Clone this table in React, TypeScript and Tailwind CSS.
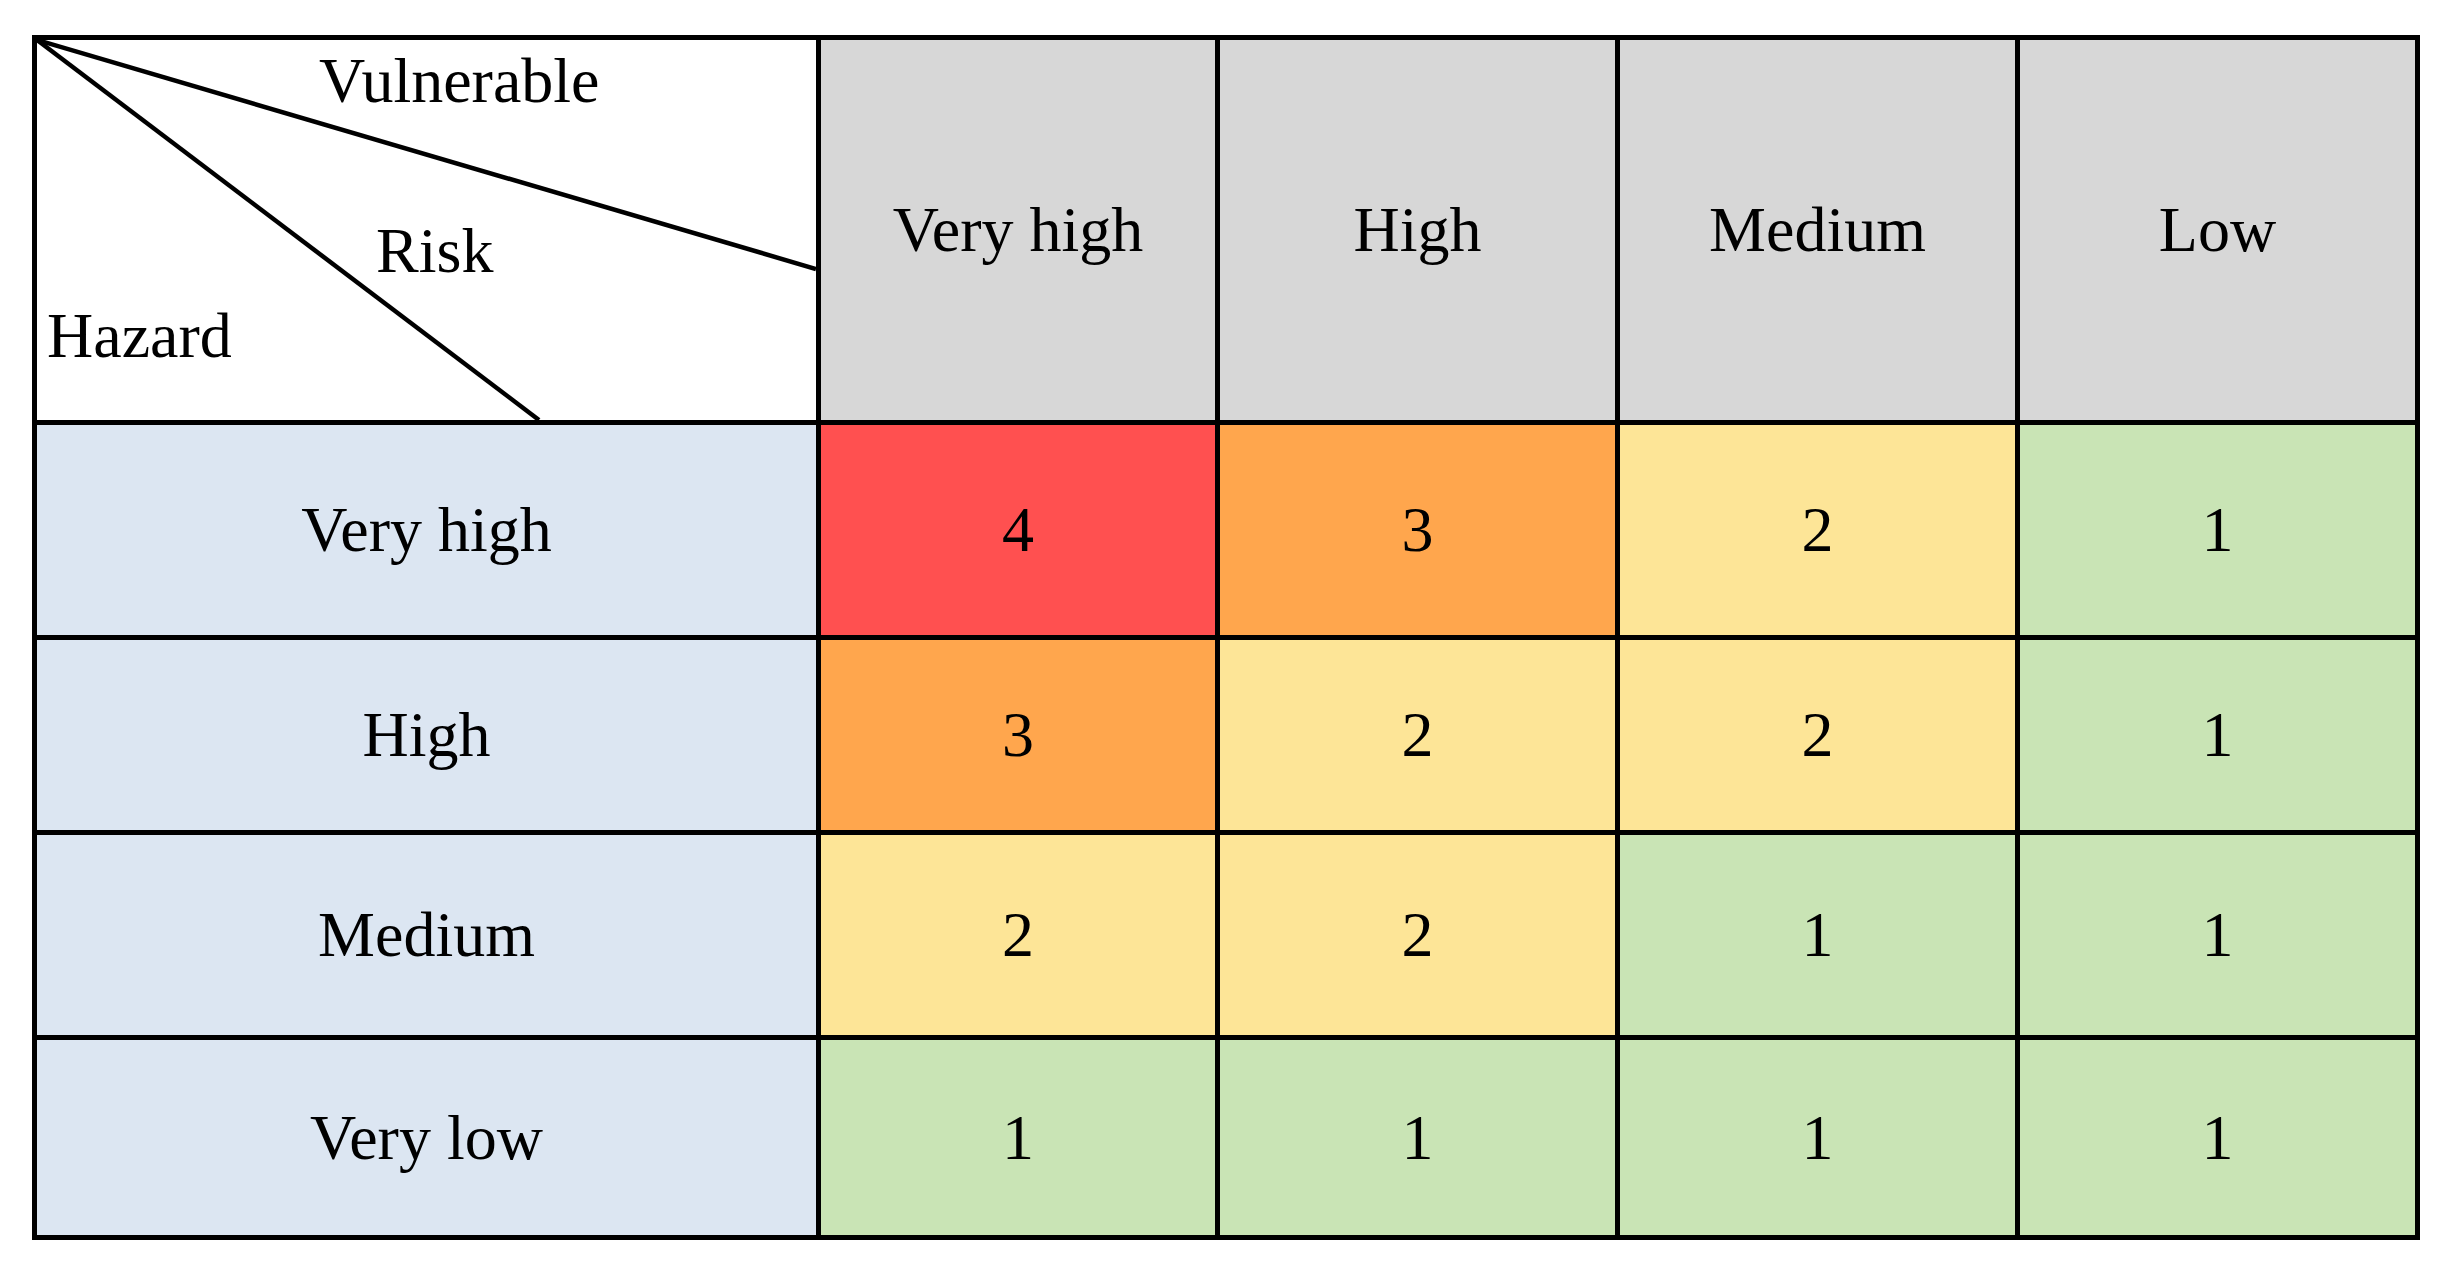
import React from 'react';

type Level = 4 | 3 | 2 | 1;

const columns = ['Very high', 'High', 'Medium', 'Low'];

const rows: { label: string; values: Level[] }[] = [
  { label: 'Very high', values: [4, 3, 2, 1] },
  { label: 'High', values: [3, 2, 2, 1] },
  { label: 'Medium', values: [2, 2, 1, 1] },
  { label: 'Very low', values: [1, 1, 1, 1] },
];

const levelBg: Record<Level, string> = {
  4: 'bg-[#ff5050]',
  3: 'bg-[#ffa64d]',
  2: 'bg-[#fde597]',
  1: 'bg-[#c9e4b5]',
};

function CornerCell() {
  return (
    <div className="relative bg-white overflow-hidden">
      <svg className="absolute inset-0" width="779" height="380" viewBox="0 0 779 380">
        <line x1="0" y1="0" x2="779" y2="229" stroke="#000" strokeWidth="4.5" />
        <line x1="0" y1="0" x2="502" y2="380" stroke="#000" strokeWidth="4.5" />
      </svg>
      <span className="absolute left-[282px] top-[9px] leading-none">Vulnerable</span>
      <span className="absolute left-[339px] top-[179px] leading-none">Risk</span>
      <span className="absolute left-[10px] top-[264px] leading-none">Hazard</span>
    </div>
  );
}

export default function App() {
  return (
    <div className="min-h-screen bg-white pt-[35px] pl-[32px]">
      <div
        className="grid w-fit gap-[5px] bg-black p-[5px] text-[64px] text-black"
        style={{ fontFamily: '"Liberation Serif", "Times New Roman", serif' }}
      >
        <div className="grid grid-cols-[779px_394px_395px_395px_395px] grid-rows-[380px_210px_190px_200px_195px] gap-[5px]">
          <CornerCell />
          {columns.map((c) => (
            <div key={c} className="flex items-center justify-center bg-[#d7d7d7] leading-none">
              {c}
            </div>
          ))}
          {rows.map((r) => (
            <React.Fragment key={r.label}>
              <div className="flex items-center justify-center bg-[#dce6f2] leading-none">{r.label}</div>
              {r.values.map((v, i) => (
                <div key={i} className={`flex items-center justify-center leading-none ${levelBg[v]}`}>
                  {v}
                </div>
              ))}
            </React.Fragment>
          ))}
        </div>
      </div>
    </div>
  );
}
